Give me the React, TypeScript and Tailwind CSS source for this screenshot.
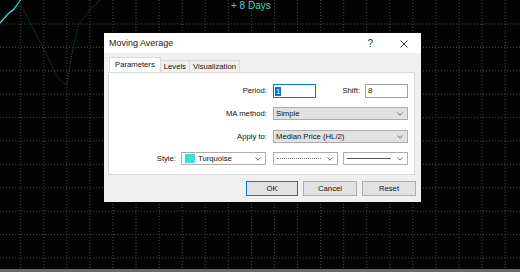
const font = "font-['Liberation_Sans',Arial,sans-serif]"

function Chevron() {
  return (
    <svg width="6" height="4" viewBox="0 0 6 4" fill="none" stroke="#606060" strokeWidth="0.9">
      <path d="M0.5 0.5L3 3.2L5.5 0.5" />
    </svg>
  )
}

function ChartBackground() {
  const xs = Array.from({ length: 22 }, (_, i) => 20.7 + i * 23.07)
  const ys = Array.from({ length: 11 }, (_, i) => 24 + i * 23.4)
  return (
    <svg className="absolute inset-0" width="520" height="272" viewBox="0 0 520 272">
      {xs.map((x) => (
        <line key={'x' + x} x1={x} y1="0" x2={x} y2="270" stroke="#4a4a4a" strokeWidth="1" strokeDasharray="1 2" />
      ))}
      {ys.map((y) => (
        <line key={'y' + y} x1="0" y1={y} x2="520" y2={y} stroke="#4a4a4a" strokeWidth="1" strokeDasharray="1 2" />
      ))}
      {/* moving average (dotted) and price line */}
      <polyline
        points="10,13 20.7,5 43.3,48.3 58.3,78.3 66.7,85 71.7,55 78.3,25 90,10 100,0"
        fill="none"
        stroke="#17695d"
        strokeWidth="1"
        strokeDasharray="1 1.5"
      />
      <polyline points="0,23 8,14 14,9 20.5,0" fill="none" stroke="#3fe0d0" strokeWidth="1.2" />
      <rect x="0" y="269" width="520" height="3" fill="#6a6a6a" />
    </svg>
  )
}

function Select({ w, children }: { w: string; children: React.ReactNode }) {
  return (
    <div className={`${w} h-[13px] bg-[#e1e1e1] border border-[#adadad] flex items-center pl-[2px] pr-[4px]`}>
      <div className="flex-1 flex items-center min-w-0">{children}</div>
      <Chevron />
    </div>
  )
}

function WhiteSelect({ w, children }: { w: string; children: React.ReactNode }) {
  return (
    <div className={`${w} h-[13px] bg-white border border-[#adadad] flex items-center pl-[3px] pr-[4px]`}>
      <div className="flex-1 flex items-center min-w-0">{children}</div>
      <Chevron />
    </div>
  )
}

export default function App() {
  return (
    <div className={`relative w-[520px] h-[272px] bg-[#030303] overflow-hidden ${font}`}>
      <ChartBackground />
      <div className="absolute left-[231px] top-[0px] text-[10px] leading-[12px] text-[#3fd8cc]">+ 8 Days</div>

      <div className="absolute left-[104px] top-[33px] w-[317px] h-[169px] bg-[#f0f0f0] flex flex-col text-[7.7px] text-[#111]">
        {/* title bar */}
        <div className="h-[20px] bg-white flex items-center pl-[5px] pr-[13px] pt-[1px]">
          <span className="text-[9px] text-[#222] flex-1">Moving Average</span>
          <span className="text-[10px] text-[#333] mr-[27px]">?</span>
          <svg width="8" height="8" viewBox="0 0 8 8" stroke="#222" strokeWidth="0.9">
            <path d="M0.5 0.5L7.5 7.5M7.5 0.5L0.5 7.5" />
          </svg>
        </div>

        {/* tabs */}
        <div className="flex items-end pl-[5px] pt-[4px]">
          <div className="h-[15px] bg-white border border-b-0 border-[#d9d9d9] px-[5px] flex items-center">Parameters</div>
          <div className="h-[12px] border border-b-0 border-l-0 border-[#d9d9d9] px-[3px] flex items-center">Levels</div>
          <div className="h-[12px] border border-b-0 border-l-0 border-[#d9d9d9] px-[3px] flex items-center">Visualization</div>
        </div>

        {/* panel */}
        <div className="ml-[4px] w-[307px] h-[103px] bg-white border border-[#d9d9d9] pt-[11px] flex flex-col">
          <div className="flex items-center h-[14px]">
            <span className="w-[158px] text-right">Period:</span>
            <div className="ml-[6px] w-[43px] h-[14px] border border-[#0078d7] flex items-center pl-[1px]">
              <span className="bg-[#0078d7] text-white leading-[9px] px-[1px]">1</span>
            </div>
            <span className="w-[44px] text-right">Shift:</span>
            <div className="ml-[5px] w-[43px] h-[14px] border border-[#a0a0a0] flex items-center pl-[2px]">8</div>
          </div>
          <div className="flex items-center mt-[9px]">
            <span className="w-[158px] text-right">MA method:</span>
            <div className="ml-[6px]">
              <Select w="w-[135px]">Simple</Select>
            </div>
          </div>
          <div className="flex items-center mt-[10px]">
            <span className="w-[158px] text-right">Apply to:</span>
            <div className="ml-[6px]">
              <Select w="w-[135px]">Median Price (HL/2)</Select>
            </div>
          </div>
          <div className="flex items-center mt-[9px]">
            <span className="w-[67px] text-right">Style:</span>
            <div className="ml-[5px]">
              <WhiteSelect w="w-[85px]">
                <span className="w-[10px] h-[9px] bg-[#40e0d0] mr-[3px]" />
                Turquoise
              </WhiteSelect>
            </div>
            <div className="ml-[7px]">
              <WhiteSelect w="w-[65px]">
                <span className="w-[45px] border-t border-dotted border-[#777] mr-[6px]" />
              </WhiteSelect>
            </div>
            <div className="ml-[5px]">
              <WhiteSelect w="w-[65px]">
                <span className="w-[46px] border-t border-[#555] mr-[6px]" />
              </WhiteSelect>
            </div>
          </div>
        </div>

        {/* buttons */}
        <div className="flex justify-end gap-[5px] pr-[5px] mt-[6px]">
          <button className="w-[52px] h-[15px] bg-[#e1e1e1] border border-[#0078d7] text-[7.7px]">OK</button>
          <button className="w-[54px] h-[15px] bg-[#e1e1e1] border border-[#adadad] text-[7.7px]">Cancel</button>
          <button className="w-[54px] h-[15px] bg-[#e1e1e1] border border-[#adadad] text-[7.7px]">Reset</button>
        </div>
      </div>
    </div>
  )
}
